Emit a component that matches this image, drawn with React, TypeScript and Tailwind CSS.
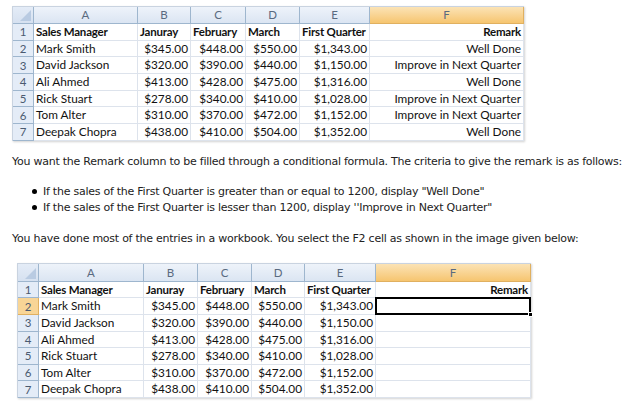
import React from "react";

type Row = [string, string, string, string, string, string];

const rows: Row[] = [
  ["Mark Smith", "$345.00", "$448.00", "$550.00", "$1,343.00", "Well Done"],
  ["David Jackson", "$320.00", "$390.00", "$440.00", "$1,150.00", "Improve in Next Quarter"],
  ["Ali Ahmed", "$413.00", "$428.00", "$475.00", "$1,316.00", "Well Done"],
  ["Rick Stuart", "$278.00", "$340.00", "$410.00", "$1,028.00", "Improve in Next Quarter"],
  ["Tom Alter", "$310.00", "$370.00", "$472.00", "$1,152.00", "Improve in Next Quarter"],
  ["Deepak Chopra", "$438.00", "$410.00", "$504.00", "$1,352.00", "Well Done"],
];

const cellFont = { fontFamily: 'Lato, "Open Sans", sans-serif' };

function Corner() {
  return (
    <div className="relative border-r border-b border-[#9eb6ce] bg-gradient-to-b from-[#e4ecf7] to-[#d6e1f0]">
      <svg className="absolute right-[2px] bottom-[2px]" width="11" height="11" viewBox="0 0 11 11">
        <polygon points="11,0 11,11 0,11" fill="#b9cbe2" />
      </svg>
    </div>
  );
}

function ColHead({ label, orange }: { label: string; orange?: boolean }) {
  return (
    <div
      className={
        "flex items-center justify-center border-r border-b text-[11.5px] text-[#5a6a80] " +
        (orange
          ? "bg-gradient-to-b from-[#fbe3b5] to-[#f6c56f] border-[#e0b060]"
          : "bg-gradient-to-b from-[#eef3fa] to-[#dbe5f2] border-[#9eb6ce]")
      }
    >
      {label}
    </div>
  );
}

function RowHead({ n, orange }: { n: number; orange?: boolean }) {
  return (
    <div
      className={
        "flex items-center justify-center border-r border-b text-[11.5px] text-[#4a5a70] " +
        (orange ? "bg-[#f8d596] border-[#e0b060]" : "bg-[#e4ecf7] border-[#9eb6ce]")
      }
    >
      {n}
    </div>
  );
}

function Cell({
  children,
  right,
  bold,
}: {
  children?: React.ReactNode;
  right?: boolean;
  bold?: boolean;
}) {
  return (
    <div
      className={
        "flex items-center whitespace-nowrap border-r border-b border-[#dde3ec] px-[2px] text-[#111] " +
        (right ? "justify-end " : "justify-start ") +
        (bold ? "font-bold text-[11.5px] tracking-[-0.2px]" : "text-[11.8px]")
      }
    >
      {children}
    </div>
  );
}

function Sheet({
  cols,
  rowsCls,
  filled,
}: {
  cols: string;
  rowsCls: string;
  filled: boolean;
}) {
  return (
    <div
      className={"grid border-l border-t border-[#c9d3e0] shadow-[1px_1px_2px_rgba(0,0,0,0.18)] " + cols + " " + rowsCls}
      style={cellFont}
    >
      <Corner />
      <ColHead label="A" />
      <ColHead label="B" />
      <ColHead label="C" />
      <ColHead label="D" />
      <ColHead label="E" />
      <ColHead label="F" orange />

      <RowHead n={1} />
      <Cell bold>Sales Manager</Cell>
      <Cell bold>Januray</Cell>
      <Cell bold>February</Cell>
      <Cell bold>March</Cell>
      <Cell bold>First Quarter</Cell>
      <Cell bold right>
        Remark
      </Cell>

      {rows.map((r, i) => (
        <React.Fragment key={i}>
          <RowHead n={i + 2} orange={!filled && i === 0} />
          <Cell>{r[0]}</Cell>
          <Cell right>{r[1]}</Cell>
          <Cell right>{r[2]}</Cell>
          <Cell right>{r[3]}</Cell>
          <Cell right>{r[4]}</Cell>
          {filled ? (
            <Cell right>{r[5]}</Cell>
          ) : i === 0 ? (
            <div className="relative border-[2px] border-black -ml-[1px] -mt-[1px]">
              <div className="absolute -right-[4px] -bottom-[4px] h-[5px] w-[5px] bg-black border border-white" />
            </div>
          ) : (
            <Cell />
          )}
        </React.Fragment>
      ))}
    </div>
  );
}

export default function App() {
  const textFont = { fontFamily: '"DejaVu Sans", Tahoma, sans-serif' };
  return (
    <div className="w-[628px] h-[414px] overflow-hidden bg-white">
      <div className="ml-[12px] pt-[6px] w-[512px]">
        <Sheet
          cols="grid-cols-[21px_104px_53px_55px_54px_70px_154px]"
          rowsCls="grid-rows-[17px_repeat(7,16.7px)]"
          filled
        />
      </div>

      <div className="text-[11px] tracking-[-0.25px] text-[#222] leading-[16px]" style={textFont}>
        <p className="ml-[12px] mt-[13px] whitespace-nowrap">
          You want the Remark column to be filled through a conditional formula. The criteria to give the remark is as follows:
        </p>
        <ul className="mt-[14px] ml-[32px]">
          <li className="flex items-center">
            <span className="mr-[6px] inline-block h-[5px] w-[5px] rounded-full bg-black" />
            If the sales of the First Quarter is greater than or equal to 1200, display "Well Done"
          </li>
          <li className="flex items-center">
            <span className="mr-[6px] inline-block h-[5px] w-[5px] rounded-full bg-black" />
            If the sales of the First Quarter is lesser than 1200, display ''Improve in Next Quarter"
          </li>
        </ul>
        <p className="ml-[12px] mt-[15px] whitespace-nowrap">
          You have done most of the entries in a workbook. You select the F2 cell as shown in the image given below:
        </p>
      </div>

      <div className="ml-[17px] mt-[16px] w-[514px]">
        <Sheet
          cols="grid-cols-[21px_105px_54px_54px_53px_71px_155px]"
          rowsCls="grid-rows-[18px_repeat(7,16.6px)]"
          filled={false}
        />
      </div>
    </div>
  );
}
